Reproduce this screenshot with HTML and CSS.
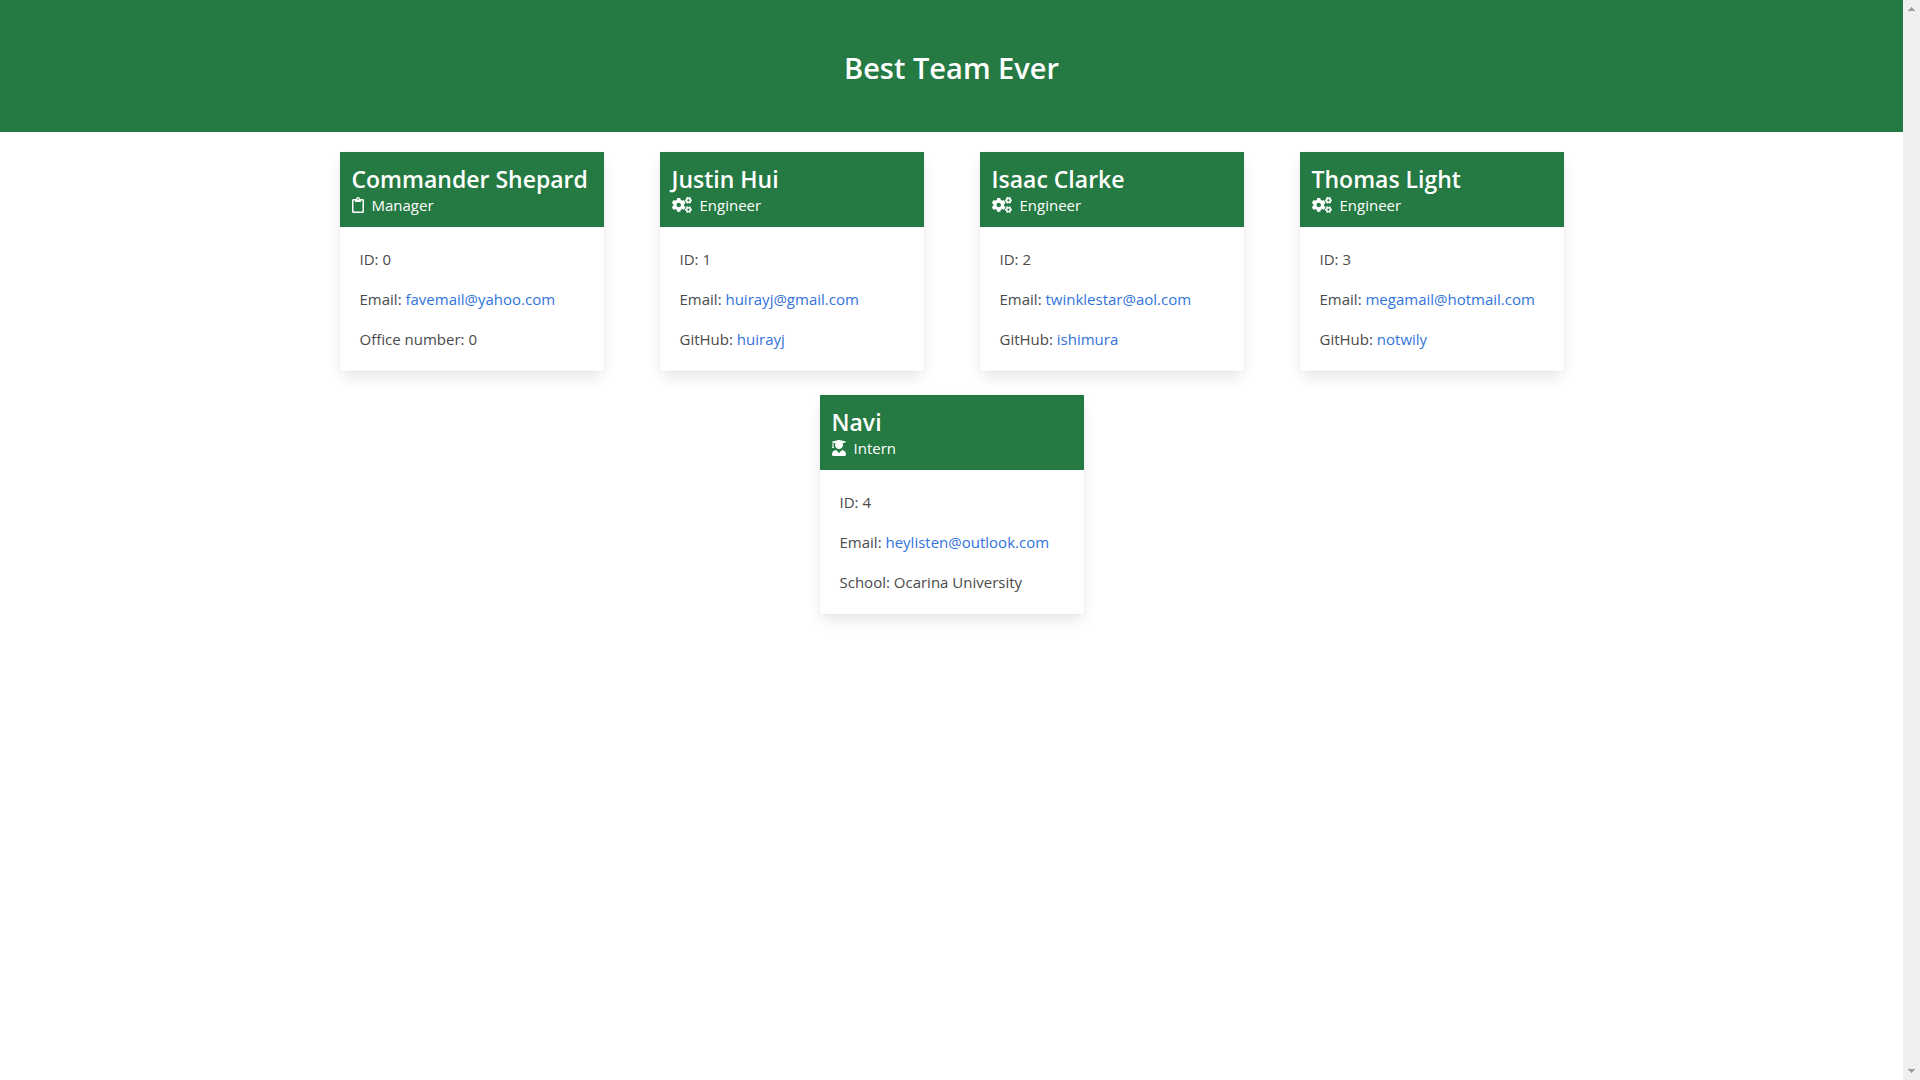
FILE: index.html
```html
<!DOCTYPE html>
<html lang="en">
<head>
  <meta charset="utf-8">
  <meta name="viewport" content="width=device-width, initial-scale=1">
  <title>Best Team Ever</title>
  <link rel="stylesheet" href="styles.css">
</head>
<body>
  <svg class="sprite" aria-hidden="true">
    <symbol id="clipboard" viewBox="0 0 384 512"><path d="M336 64h-80c0-35.3-28.7-64-64-64s-64 28.7-64 64H48C21.5 64 0 85.5 0 112v352c0 26.5 21.5 48 48 48h288c26.5 0 48-21.5 48-48V112c0-26.5-21.5-48-48-48zM192 40c13.3 0 24 10.7 24 24s-10.7 24-24 24-24-10.7-24-24 10.7-24 24-24zm144 418c0 3.3-2.7 6-6 6H54c-3.3 0-6-2.7-6-6V118c0-3.3 2.7-6 6-6h42v36c0 6.6 5.4 12 12 12h168c6.6 0 12-5.4 12-12v-36h42c3.3 0 6 2.7 6 6z"/></symbol>
    <symbol id="cogs" viewBox="0 0 640 512">
      <path id="small-cog" d="M512.1 191l-8.2 14.3c-3 5.3-9.4 7.5-15.1 5.4-11.8-4.4-22.6-10.7-32.1-18.6-4.6-3.8-5.8-10.5-2.8-15.7l8.2-14.3c-6.9-8-12.3-17.3-15.9-27.4h-16.5c-6 0-11.2-4.3-12.2-10.3-2-12-2.1-24.6 0-37.1 1-6 6.2-10.4 12.2-10.4h16.5c3.6-10.1 9-19.4 15.9-27.4l-8.2-14.3c-3-5.2-1.9-11.9 2.8-15.7 9.5-7.9 20.4-14.2 32.1-18.6 5.7-2.1 12.1.1 15.1 5.4l8.2 14.3c10.5-1.9 21.2-1.9 31.7 0L552 6.3c3-5.3 9.4-7.5 15.1-5.4 11.8 4.4 22.6 10.7 32.1 18.6 4.6 3.8 5.8 10.5 2.8 15.7l-8.2 14.3c6.9 8 12.3 17.3 15.9 27.4h16.5c6 0 11.2 4.3 12.2 10.3 2 12 2.1 24.6 0 37.1-1 6-6.2 10.4-12.2 10.4h-16.5c-3.6 10.1-9 19.4-15.9 27.4l8.2 14.3c3 5.2 1.9 11.9-2.8 15.7-9.5 7.9-20.4 14.2-32.1 18.6-5.7 2.1-12.1-.1-15.1-5.4l-8.2-14.3c-10.4 1.9-21.2 1.9-31.7 0zm-10.5-58.8c38.5 29.6 82.4-14.3 52.8-52.8-38.5-29.7-82.4 14.3-52.8 52.8z"/>
      <use href="#small-cog" transform="translate(0 299)"/>
      <path d="M386.3 286.1l33.7 16.8c10.1 5.8 14.5 18.1 10.5 29.1-8.9 24.2-26.4 46.4-42.6 65.8-7.4 8.9-20.2 11.1-30.3 5.3l-29.1-16.8c-16 13.7-34.6 24.6-54.9 31.7v33.6c0 11.6-8.3 21.6-19.7 23.6-24.6 4.2-50.4 4.4-75.9 0-11.5-2-20-11.9-20-23.6V418c-20.3-7.2-38.9-18-54.9-31.7L74 403c-10 5.8-22.9 3.6-30.3-5.3-16.2-19.4-33.3-41.6-42.2-65.7-4-10.9.4-23.2 10.5-29.1l33.3-16.8c-3.9-20.9-3.9-42.4 0-63.4L12 205.8c-10.1-5.8-14.6-18.1-10.5-29 8.9-24.2 26-46.4 42.2-65.8 7.4-8.9 20.2-11.1 30.3-5.3l29.1 16.8c16-13.7 34.6-24.6 54.9-31.7V57.1c0-11.5 8.2-21.5 19.6-23.5 24.6-4.2 50.5-4.4 76-.1 11.5 2 20 11.9 20 23.6v33.6c20.3 7.2 38.9 18 54.9 31.7l29.1-16.8c10-5.8 22.9-3.6 30.3 5.3 16.2 19.4 33.2 41.6 42.1 65.8 4 10.9.1 23.2-10 29.1l-33.7 16.8c3.9 21 3.9 42.5 0 63.5zm-117.6 21.1c59.2-77-28.7-164.9-105.7-105.7-59.2 77 28.7 164.9 105.7 105.7z"/>
    </symbol>
    <symbol id="graduate" viewBox="0 0 448 512"><path d="M319.4 320.6L224 416l-95.4-95.4C57.1 323.7 0 382.2 0 454.4v9.6c0 26.5 21.5 48 48 48h352c26.5 0 48-21.5 48-48v-9.6c0-72.2-57.1-130.7-128.6-133.8zM13.6 79.8l6.4 1.5v58.4c-7 4.2-12 11.5-12 20.3 0 8.4 4.6 15.4 11.1 19.7L3.5 242c-1.7 6.9 2.1 14 7.6 14h41.8c5.5 0 9.3-7.1 7.6-14l-15.6-62.3C51.4 175.4 56 168.4 56 160c0-8.8-5-16.1-12-20.3V87.1l66 15.9c-8.6 17.2-14 36.4-14 57 0 70.7 57.3 128 128 128s128-57.3 128-128c0-20.6-5.3-39.8-14-57l96.3-23.2c18.2-4.4 18.2-27.1 0-31.5l-190.4-46c-13-3.1-26.7-3.1-39.7 0L13.6 48.2c-18.1 4.4-18.1 27.2 0 31.6z"/></symbol>
  </svg>

  <div class="page">
    <header class="hero">
      <h1 class="hero-title">Best Team Ever</h1>
    </header>
    <main class="team">
      <article class="card">
        <header class="card-head">
          <h2 class="name">Commander Shepard</h2>
          <p class="role"><svg class="icon icon-clipboard" aria-hidden="true"><use href="#clipboard"/></svg>Manager</p>
        </header>
        <div class="card-body">
          <p>ID: 0</p>
          <p>Email: <a href="mailto:favemail@yahoo.com">favemail@yahoo.com</a></p>
          <p>Office number: 0</p>
        </div>
      </article>
      <article class="card">
        <header class="card-head">
          <h2 class="name">Justin Hui</h2>
          <p class="role"><svg class="icon icon-cogs" aria-hidden="true"><use href="#cogs"/></svg>Engineer</p>
        </header>
        <div class="card-body">
          <p>ID: 1</p>
          <p>Email: <a href="mailto:huirayj@gmail.com">huirayj@gmail.com</a></p>
          <p>GitHub: <a href="https://github.com/huirayj">huirayj</a></p>
        </div>
      </article>
      <article class="card">
        <header class="card-head">
          <h2 class="name">Isaac Clarke</h2>
          <p class="role"><svg class="icon icon-cogs" aria-hidden="true"><use href="#cogs"/></svg>Engineer</p>
        </header>
        <div class="card-body">
          <p>ID: 2</p>
          <p>Email: <a href="mailto:twinklestar@aol.com">twinklestar@aol.com</a></p>
          <p>GitHub: <a href="https://github.com/ishimura">ishimura</a></p>
        </div>
      </article>
      <article class="card">
        <header class="card-head">
          <h2 class="name">Thomas Light</h2>
          <p class="role"><svg class="icon icon-cogs" aria-hidden="true"><use href="#cogs"/></svg>Engineer</p>
        </header>
        <div class="card-body">
          <p>ID: 3</p>
          <p>Email: <a href="mailto:megamail@hotmail.com">megamail@hotmail.com</a></p>
          <p>GitHub: <a href="https://github.com/notwily">notwily</a></p>
        </div>
      </article>
      <article class="card">
        <header class="card-head">
          <h2 class="name">Navi</h2>
          <p class="role"><svg class="icon icon-graduate" aria-hidden="true"><use href="#graduate"/></svg>Intern</p>
        </header>
        <div class="card-body">
          <p>ID: 4</p>
          <p>Email: <a href="mailto:heylisten@outlook.com">heylisten@outlook.com</a></p>
          <p>School: Ocarina University</p>
        </div>
      </article>
    </main>
  </div>

  <div class="scrollbar" aria-hidden="true">
    <svg class="arrow" viewBox="0 0 7 4"><path d="M3 0h1v1h1v1h1v1h1v1H0V3h1V2h1V1h1z"/></svg>
    <svg class="arrow" viewBox="0 0 7 4"><path d="M0 0h7v1H6v1H5v1H4v1H3V3H2V2H1V1H0z"/></svg>
  </div>
</body>
</html>
```
FILE: styles.css
```css
* {
  box-sizing: border-box;
  margin: 0;
  padding: 0;
}

body {
  display: flex;
  min-height: 100vh;
  background: #fff;
  color: #4a4a4a;
  font-family: "Open Sans", "Noto Sans", sans-serif;
  font-size: 15px;
  line-height: 24px;
}

a {
  color: #3273dc;
  text-decoration: none;
}

.sprite {
  position: absolute;
  width: 0;
  height: 0;
}

.page {
  flex: 1;
  min-width: 0;
}

.hero {
  padding: 50px 24px 46px;
  background: #257942;
  color: #fff;
  text-align: center;
}

.hero-title {
  font-size: 29px;
  font-weight: 600;
  line-height: 36px;
}

.team {
  display: flex;
  flex-wrap: wrap;
  justify-content: center;
  gap: 24px 56px;
  max-width: 1344px;
  margin: 0 auto;
  padding: 20px 0;
}

.card {
  width: 264px;
  border-radius: 4px;
  background: #fff;
  box-shadow: 0 8px 16px -2px rgba(10, 10, 10, 0.1), 0 0 0 1px rgba(10, 10, 10, 0.02);
}

.card-head {
  padding: 13px 12px 10px;
  background: #257942;
  color: #fff;
}

.name {
  font-size: 23px;
  font-weight: 600;
  line-height: 28px;
  white-space: nowrap;
}

.role {
  display: flex;
  align-items: center;
  gap: 8px;
}

.icon {
  height: 16px;
  fill: currentColor;
}

.icon-clipboard {
  width: 12px;
}

.icon-cogs {
  width: 20px;
}

.icon-graduate {
  width: 14px;
}

.card-body {
  display: flex;
  flex-direction: column;
  gap: 16px;
  padding: 20px;
}

.scrollbar {
  display: flex;
  flex-direction: column;
  justify-content: space-between;
  align-items: center;
  width: 17px;
  padding: 7px 0;
  background: #f0f0f0;
}

.arrow {
  width: 7px;
  height: 4px;
  fill: #a0a0a0;
}
```
